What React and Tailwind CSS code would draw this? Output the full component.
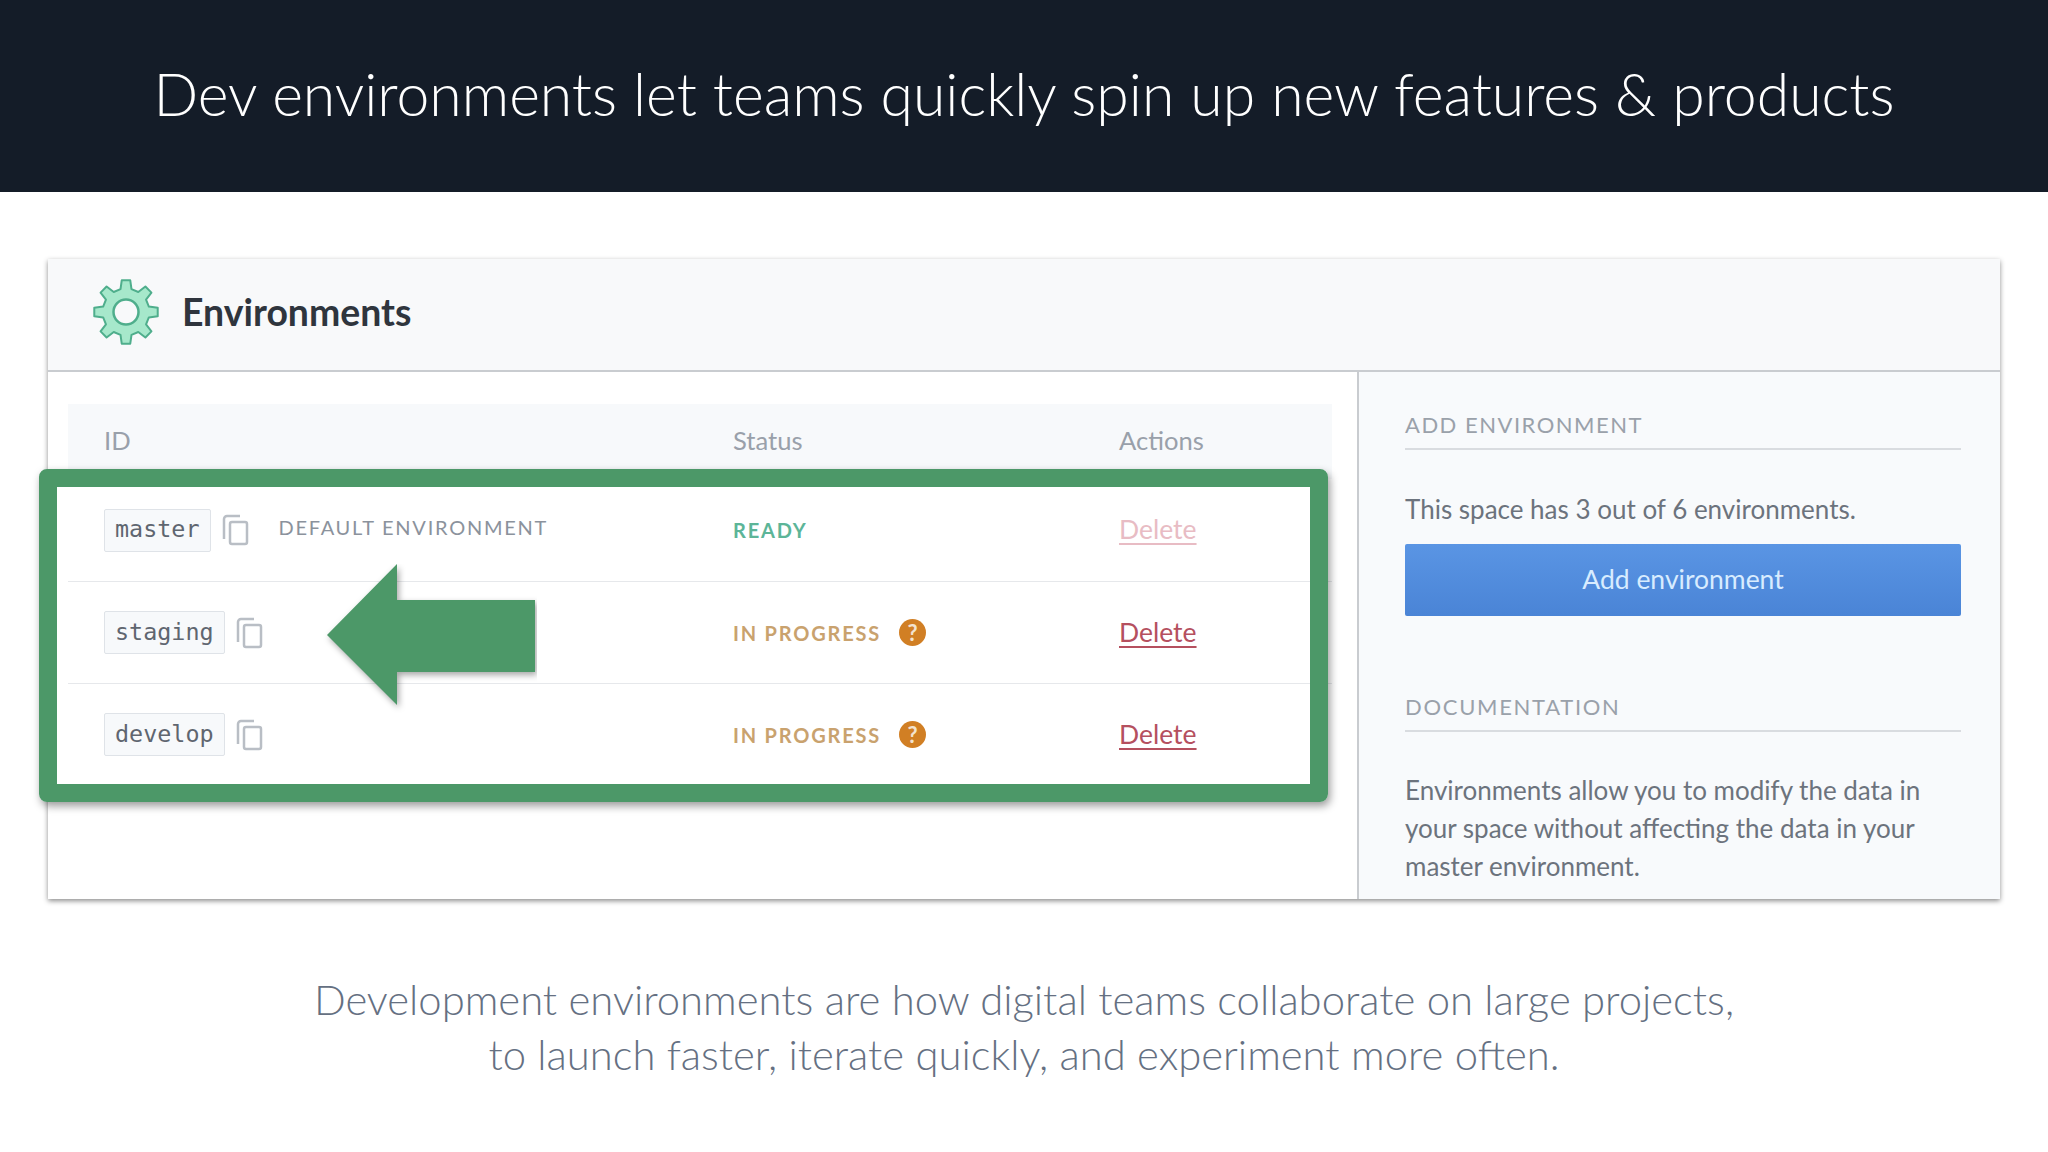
import React from "react";

const rows = [
  { id: "master", status: "READY", isDefault: true },
  { id: "staging", status: "IN PROGRESS" },
  { id: "develop", status: "IN PROGRESS" },
];

// 8 tooth gear outline
const gearPath = () => {
  const teeth = 8;
  const points = [];
  for (let i = 0; i < teeth; i++) {
    const a = (i / teeth) * Math.PI * 2 - Math.PI / 2;
    const step = (Math.PI * 2) / teeth;
    const parts = [
      [23.5, -step * 0.3],
      [32, -step * 0.17],
      [32, step * 0.17],
      [23.5, step * 0.3],
    ];
    parts.forEach(([r, d]) => {
      points.push([34 + r * Math.cos(a + d), 34 + r * Math.sin(a + d)]);
    });
  }
  return "M" + points.map((p) => p[0].toFixed(2) + " " + p[1].toFixed(2)).join("L") + "Z";
};

const GearIcon = () => (
  <svg width="68" height="68" viewBox="0 0 68 68">
    <path d={gearPath()} fill="#a6e8cb" stroke="#4fae8c" strokeWidth="2" strokeLinejoin="round" />
    <circle cx="34" cy="34" r="12.5" fill="#f8f9fa" stroke="#4fae8c" strokeWidth="2.5" />
  </svg>
);

const CopyIcon = () => (
  <svg width="28" height="32" viewBox="0 0 28 32" fill="none" stroke="#b9bec5" strokeWidth="2.5">
    <path d="M3 25V5a3 3 0 0 1 3-3h13" />
    <rect x="9" y="8" width="17" height="22" rx="2" />
  </svg>
);

const Row = ({ row, index }) => (
  <div className={`grid grid-cols-[665px_386px_1fr] items-center h-[102px] ${index > 0 ? "border-t border-[#e6e8eb]" : ""}`}>
    <div className="flex items-center pl-[36px]">
      <span className="h-[43px] px-[10px] flex items-center rounded-[2px] border border-[#dfe3e8] bg-[#f7f9fb] text-[23.4px] text-[#5f6670] font-['DejaVu_Sans_Mono',monospace]">
        {row.id}
      </span>
      <span className="ml-[10px] flex">
        <CopyIcon />
      </span>
      {row.isDefault && (
        <span className="ml-[30px] -mt-[6px] text-[20px] tracking-[1.75px] text-[#8b929c]">DEFAULT ENVIRONMENT</span>
      )}
    </div>
    <div className="flex items-center">
      <span className={`text-[20px] font-bold tracking-[1.8px] ${row.status === "READY" ? "text-[#5cb598]" : "text-[#c9a26e]"}`}>
        {row.status}
      </span>
      {row.status !== "READY" && (
        <span className="ml-[18px] w-[27px] h-[27px] rounded-full bg-[#d17f24] text-[#f3e3cf] text-[22px] font-bold flex items-center justify-center">
          ?
        </span>
      )}
    </div>
    <a className={`text-[26.5px] underline underline-offset-[4px] ${row.isDefault ? "text-[#e8bcc4]" : "text-[#b5505f]"}`}>Delete</a>
  </div>
);

const App = () => {
  return (
    <div className="w-[2048px] h-[1152px] bg-white flex flex-col overflow-hidden font-['Lato',sans-serif]">
      <header className="h-[192px] shrink-0 pb-[4px] bg-[#141c28] flex items-center justify-center">
        <h1 className="text-[58.9px] font-light text-white">Dev environments let teams quickly spin up new features &amp; products</h1>
      </header>

      <main className="pl-[48px] pt-[67px]">
        <div className="w-[1952px] h-[640px] flex flex-col bg-white shadow-[0_2px_5px_rgba(0,0,0,0.45)]">
          <div className="h-[113px] shrink-0 pl-[44px] pb-[5px] flex items-center gap-[22px] bg-[#f8f9fa] border-b-2 border-[#c9ccd0]">
            <GearIcon />
            <span className="text-[37.4px] font-bold text-[#2f353d]">Environments</span>
          </div>

          <div className="flex flex-1 min-h-0">
            <div className="relative w-[1309px] shrink-0 pt-[32px] pl-[20px] pr-[25px]">
              <div className="grid grid-cols-[665px_386px_1fr] items-center h-[75px] pb-[3px] bg-[#f7f9fb] text-[25.6px] text-[#99a0aa]">
                <span className="pl-[36px]">ID</span>
                <span>Status</span>
                <span>Actions</span>
              </div>
              {rows.map((row, index) => (
                <Row key={row.id} row={row} index={index} />
              ))}

              {/* green highlight and arrow over the table */}
              <div className="absolute left-[-9px] top-[97px] w-[1289px] h-[333px] rounded-[8px] border-[18px] border-[#4c9868] shadow-[2px_4px_8px_rgba(0,0,0,0.4)]" />
              <svg className="absolute left-[269px] top-[192px]" width="220" height="150" viewBox="0 0 220 150">
                <path d="M10 71L80 0V36H218V108H80V141Z" fill="#4c9868" style={{ filter: "drop-shadow(2px 3px 3px rgba(0,0,0,0.35))" }} />
              </svg>
            </div>

            <aside className="flex-1 border-l-2 border-[#c9ccd0] bg-[#f8fafc] pl-[46px] pr-[39px] pt-[36px]">
              <h2 className="text-[22px] tracking-[1.5px] text-[#9aa1aa] pb-[7px] border-b-2 border-[#d9dce0]">ADD ENVIRONMENT</h2>
              <p className="mt-[40px] text-[26px] text-[#6c737d]">This space has 3 out of 6 environments.</p>
              <button className="mt-[15px] w-full h-[72px] rounded-[2px] bg-gradient-to-b from-[#5a95e4] to-[#4a84d6] text-[26.5px] text-[#d8ecff]">
                Add environment
              </button>
              <h2 className="mt-[74px] text-[22px] tracking-[1.7px] text-[#9aa1aa] pb-[7px] border-b-2 border-[#d9dce0]">DOCUMENTATION</h2>
              <p className="mt-[39px] text-[26px] leading-[38px] text-[#6c737d]">
                Environments allow you to modify the data in your space without affecting the data in your master environment.
              </p>
            </aside>
          </div>
        </div>
      </main>

      <footer className="mt-[73px] text-center text-[41.8px] leading-[55px] font-light text-[#657082]">
        <p>Development environments are how digital teams collaborate on large projects,</p>
        <p>to launch faster, iterate quickly, and experiment more often.</p>
      </footer>
    </div>
  );
};

export default App;
